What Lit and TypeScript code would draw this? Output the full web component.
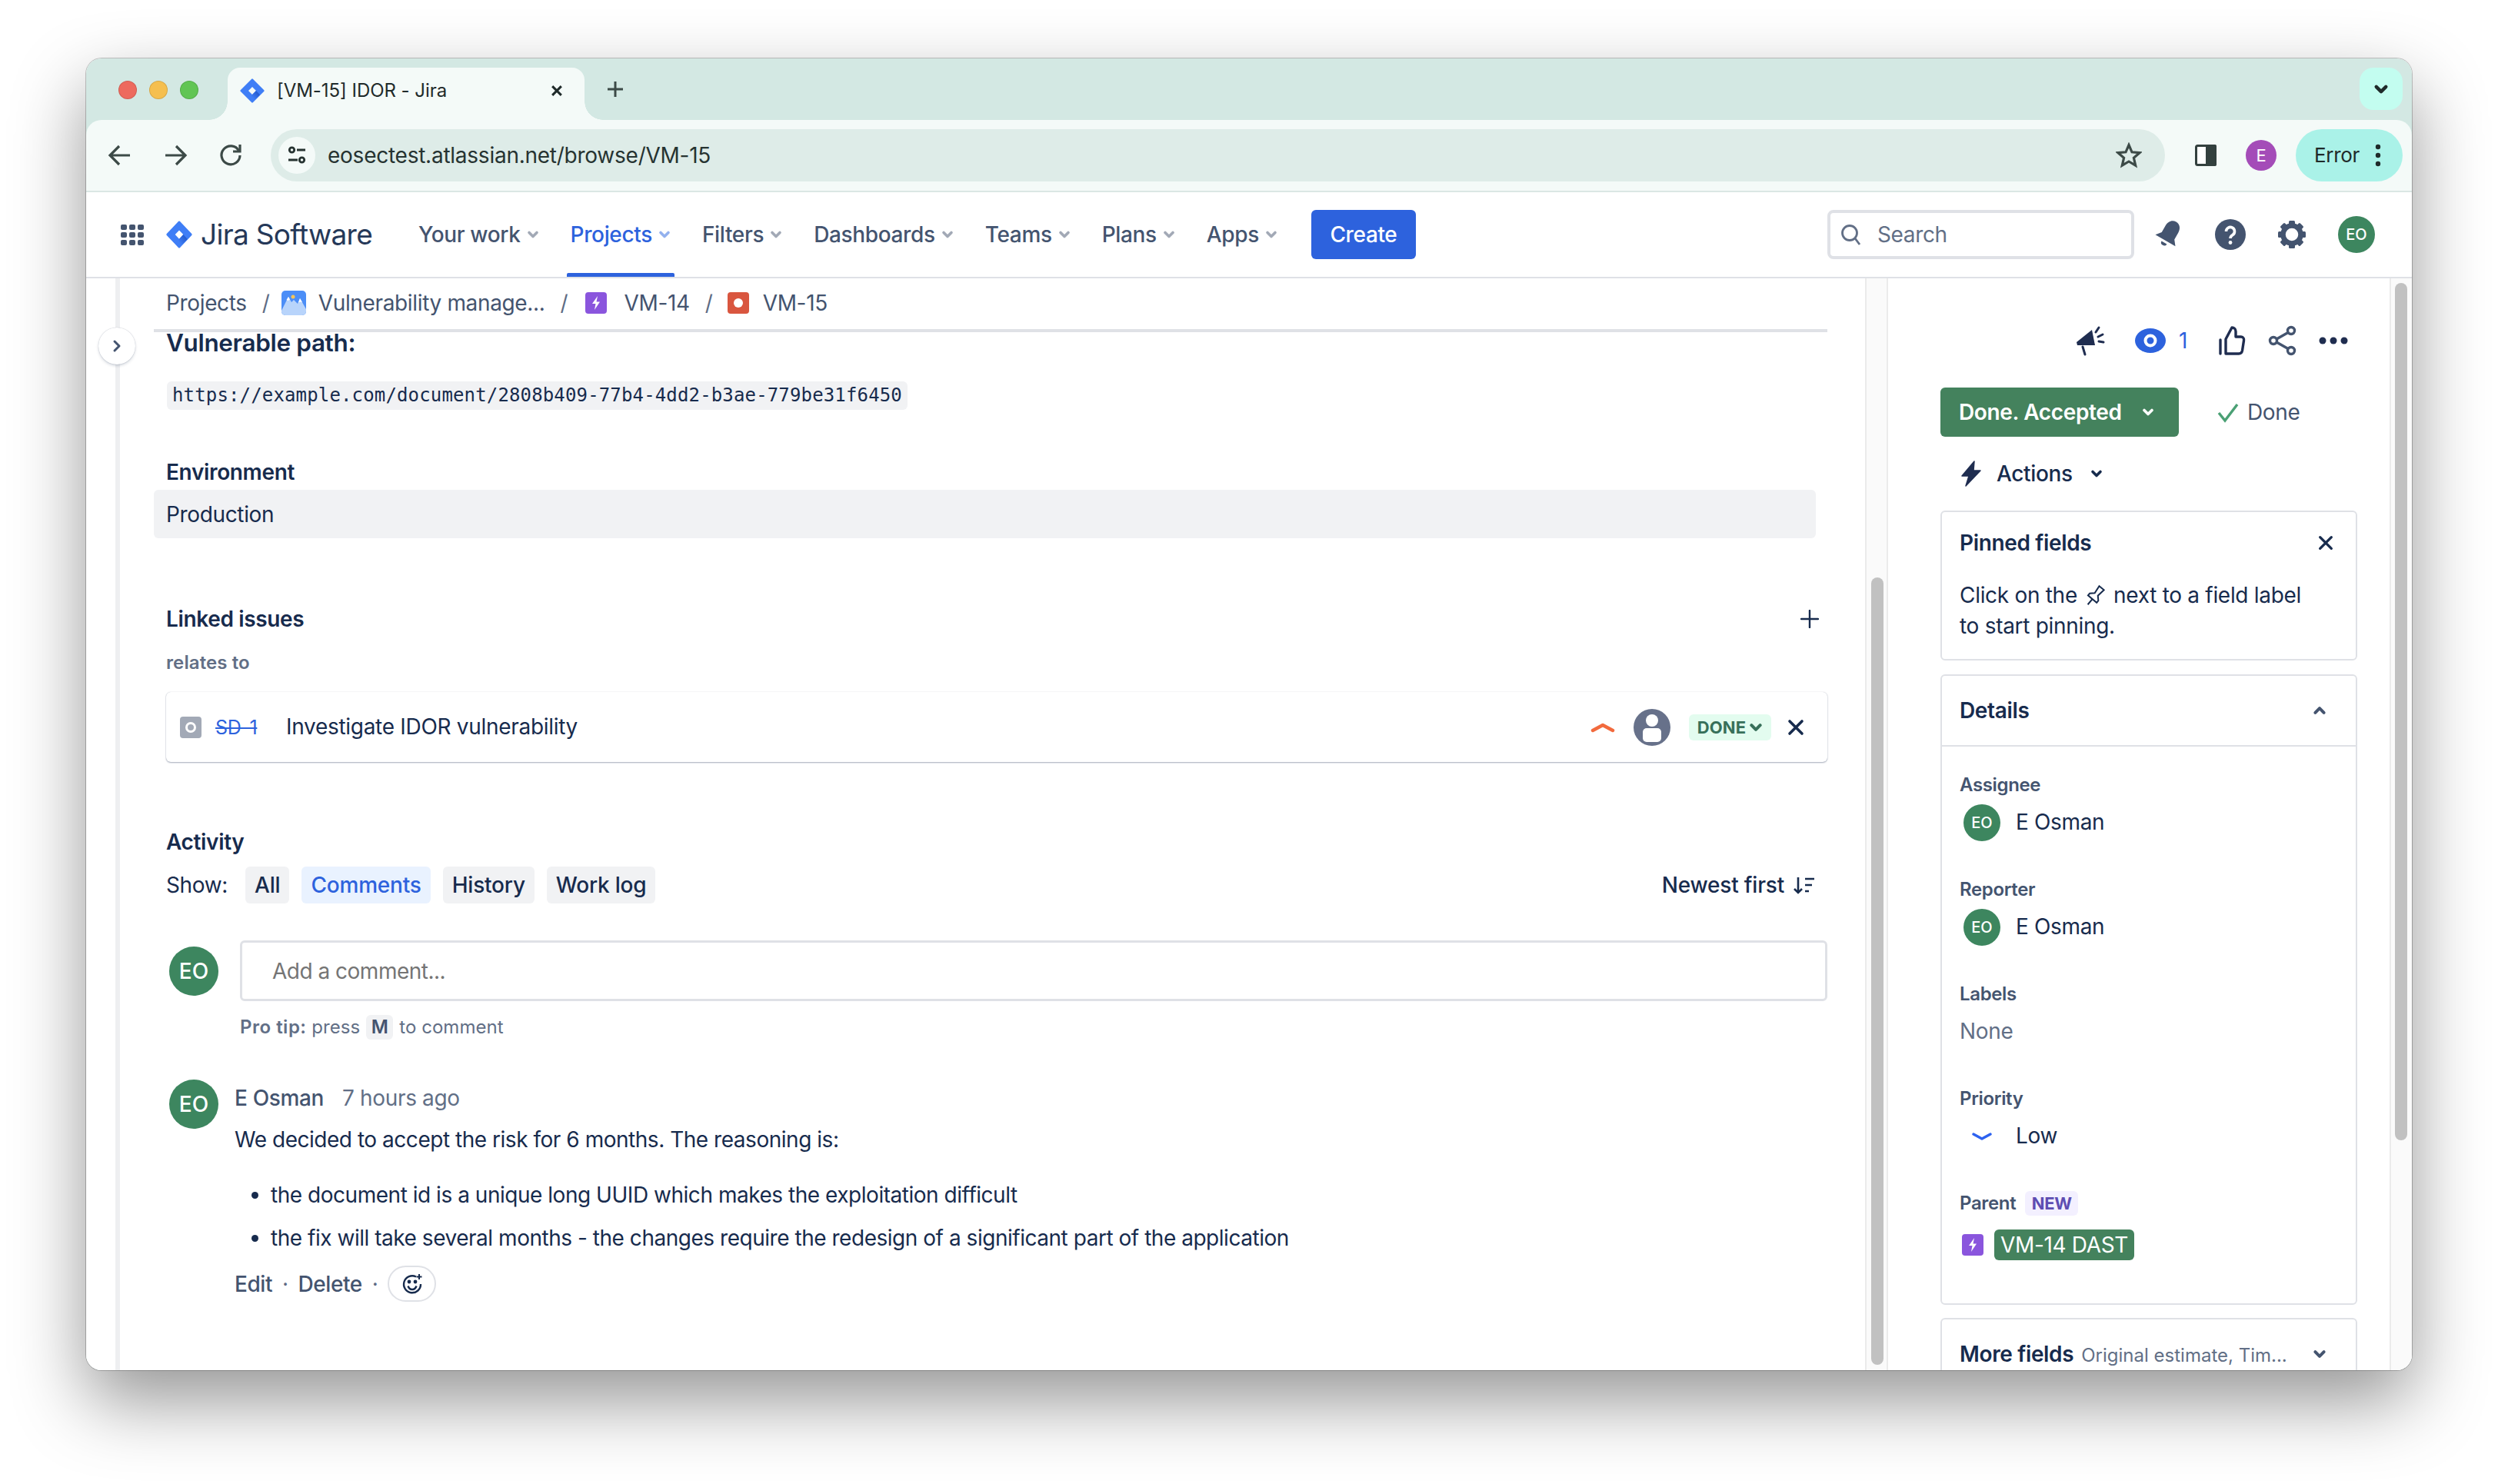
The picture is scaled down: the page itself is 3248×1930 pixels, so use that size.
import { LitElement, css, html, svg } from 'lit';
import { customElement } from 'lit/decorators.js';

const jiraLogo = svg`
  <defs>
    <linearGradient id="jg" x1="0.9" y1="0.1" x2="0.35" y2="0.75">
      <stop offset="0" stop-color="#1f55c8" />
      <stop offset="1" stop-color="#3f7ef6" />
    </linearGradient>
  </defs>
  <path fill="#3f7ef6" fill-rule="evenodd" d="M15.2.7a1.2 1.2 0 0 1 1.6 0l14.5 14.5a1.2 1.2 0 0 1 0 1.6L16.8 31.3a1.2 1.2 0 0 1-1.6 0L.7 16.8a1.2 1.2 0 0 1 0-1.6zM16 11l-5 5 5 5 5-5z" />
  <path fill="url(#jg)" d="M16 21l5-5 5 5.3-10 10a8 8 0 0 1 0-10.300z" />`;

const chevronDown = svg`<path d="M3 5.500l5 5 5-5" fill="none" stroke="currentColor" stroke-width="3.600" stroke-linecap="round" stroke-linejoin="round" />`;
const cross = svg`<path d="M4 4l16 16M20 4L4 20" fill="none" stroke="currentColor" stroke-width="3.600" stroke-linecap="round" />`;
const epicIcon = svg`<rect width="28" height="28" rx="4" fill="#8a55dd" /><path d="M16 5l-7 10h4.500l-1.500 8 7-10.500h-4.500z" fill="#fff" />`;

type Field = { label: string; kind: 'user' | 'none' | 'priority' | 'parent' };

const navItems = ['Your work', 'Projects', 'Filters', 'Dashboards', 'Teams', 'Plans', 'Apps'];
const filters = ['All', 'Comments', 'History', 'Work log'];
const fields: Field[] = [
  { label: 'Assignee', kind: 'user' },
  { label: 'Reporter', kind: 'user' },
  { label: 'Labels', kind: 'none' },
  { label: 'Priority', kind: 'priority' },
  { label: 'Parent', kind: 'parent' },
];

@customElement('app-root')
export class AppRoot extends LitElement {
  static override styles = css`
    :host {
      display: block;
      padding: 76px 112px 148px;
      background: #fff;
      font-family: Inter, 'Liberation Sans', sans-serif;
      font-size: 28px;
      line-height: 40px;
      color: #172b4d;
      letter-spacing: -0.35px;
    }
    * {
      box-sizing: border-box;
    }
    svg {
      display: block;
      flex: none;
    }
    .window {
      width: 3024px;
      height: 1706px;
      border-radius: 20px;
      overflow: hidden;
      background: #d3e8e3;
      display: flex;
      flex-direction: column;
    }
    .frame-shadow {
      border-radius: 20px;
      box-shadow: 0 40px 95px rgba(0, 0, 0, 0.42), 0 0 0 1px rgba(0, 0, 0, 0.22);
    }

    /* browser chrome */
    .tabstrip {
      height: 80px;
      flex: none;
      display: flex;
      padding-left: 42px;
    }
    .lights {
      display: flex;
      gap: 16px;
      margin-top: 29px;
    }
    .light {
      width: 24px;
      height: 24px;
      border-radius: 50%;
      border: 1px solid rgba(0, 0, 0, 0.12);
    }
    .tab {
      position: relative;
      width: 464px;
      height: 68px;
      margin: 12px 0 0 38px;
      background: #f4faf8;
      border-radius: 16px 16px 0 0;
      display: flex;
      align-items: center;
      padding: 0 0 8px 16px;
      font-size: 24px;
      color: #1f2a2a;
    }
    .tab::before,
    .tab::after {
      content: '';
      position: absolute;
      bottom: 0;
      width: 24px;
      height: 24px;
    }
    .tab::before {
      left: -24px;
      background: radial-gradient(circle at 0 0, transparent 23.5px, #f4faf8 24px);
    }
    .tab::after {
      right: -24px;
      background: radial-gradient(circle at 100% 0, transparent 23.5px, #f4faf8 24px);
    }
    .tab-title {
      margin-left: 16px;
      width: 354px;
      letter-spacing: -0.05px;
    }
    .tab-close {
      color: #1f2a2a;
    }
    .new-tab {
      margin: 28px 0 0 28px;
      color: #3c4a47;
    }
    .tab-menu {
      margin: 12px 12px 0 auto;
      width: 56px;
      height: 55px;
      border-radius: 18px;
      background: #c3fdf0;
      display: flex;
      align-items: center;
      justify-content: center;
      color: #1f2a2a;
    }
    .toolbar {
      height: 94px;
      flex: none;
      background: #f4faf8;
      border-radius: 20px 20px 0 0;
      border-bottom: 2px solid #dbe7e4;
      display: flex;
      align-items: center;
      padding-left: 24px;
      gap: 32px;
      color: #3c4a47;
    }
    .tool {
      width: 40px;
      height: 40px;
      flex: none;
    }
    .omnibox {
      width: 2463px;
      height: 68px;
      flex: none;
      border-radius: 34px;
      background: #deece8;
      display: flex;
      align-items: center;
      padding-left: 10px;
      color: #263331;
    }
    .tune {
      width: 48px;
      height: 48px;
      border-radius: 50%;
      background: #f4faf8;
      display: flex;
      align-items: center;
      justify-content: center;
      margin-right: 16px;
    }
    .url {
      letter-spacing: -0.25px;
    }
    .star {
      margin-left: auto;
      margin-right: 30px;
    }
    .panel-toggle {
      margin-left: 1px;
    }
    .profile {
      width: 40px;
      height: 40px;
      border-radius: 50%;
      background: #a44cb8;
      color: #fff;
      font-size: 22px;
      display: flex;
      align-items: center;
      justify-content: center;
    }
    .error-pill {
      margin-left: -7px;
      width: 139px;
      height: 68px;
      border-radius: 34px;
      background: #aaf2e8;
      display: flex;
      align-items: center;
      justify-content: space-between;
      padding: 0 28px 0 24px;
      font-size: 26px;
      letter-spacing: -0.3px;
      color: #1f2a2a;
    }

    /* jira nav */
    .nav {
      height: 112px;
      flex: none;
      background: #fff;
      border-bottom: 2px solid #dfe1e6;
      display: flex;
      align-items: center;
      padding: 0 48px 0 44px;
    }
    .apps-grid {
      margin-right: 28px;
    }
    .wordmark {
      width: 224px;
      margin: 0 59px 0 11px;
      font-size: 37px;
      letter-spacing: -0.7px;
      color: #253858;
      white-space: nowrap;
    }
    .nav-items {
      display: flex;
      gap: 41px;
    }
    .nav-item {
      position: relative;
      height: 110px;
      display: flex;
      align-items: center;
      gap: 8px;
      font-weight: 500;
      color: #44546f;
    }
    .nav-item svg {
      color: #a2a9b6;
    }
    .nav-item.active {
      color: #2d62dd;
    }
    .nav-item.active svg {
      color: #93b1ee;
    }
    .nav-item.active::after {
      content: '';
      position: absolute;
      left: -5px;
      right: -5px;
      bottom: 0;
      height: 5px;
      background: #2d62dd;
      border-radius: 2px 2px 0 0;
    }
    .create {
      margin-left: 44px;
      width: 136px;
      height: 64px;
      border-radius: 6px;
      background: #2d62dd;
      color: #fff;
      font-weight: 500;
      display: flex;
      align-items: center;
      justify-content: center;
    }
    .search {
      margin-left: auto;
      width: 399px;
      height: 64px;
      border: 4px solid #dfe1e6;
      border-radius: 8px;
      display: flex;
      align-items: center;
      padding-left: 12px;
      gap: 21px;
      color: #626f86;
    }
    .bell {
      margin-left: 25px;
    }
    .nav-icon {
      margin-left: 40px;
    }
    .avatar {
      flex: none;
      border-radius: 50%;
      background: #3d865f;
      color: #fff;
      display: flex;
      align-items: center;
      justify-content: center;
      font-weight: 500;
      letter-spacing: 0;
    }
    .avatar.sm {
      width: 48px;
      height: 48px;
      font-size: 20px;
    }
    .avatar.lg {
      width: 64px;
      height: 64px;
      font-size: 28px;
    }

    /* page */
    .main {
      flex: 1;
      min-height: 0;
      display: flex;
      background: #fff;
      position: relative;
    }
    .rail {
      width: 44px;
      flex: none;
      border-right: 6px solid #eeeff1;
    }
    .expand {
      position: absolute;
      left: 16px;
      top: 64px;
      width: 48px;
      height: 48px;
      border-radius: 50%;
      background: #fff;
      box-shadow: 0 0 1px rgba(9, 30, 66, 0.31), 0 2px 4px -1px rgba(9, 30, 66, 0.25);
      display: flex;
      align-items: center;
      justify-content: center;
      color: #44546f;
    }
    .issue {
      width: 2269px;
      flex: none;
      overflow: hidden;
    }
    .crumbs {
      margin-left: 44px;
      width: 2176px;
      height: 70px;
      border-bottom: 4px solid #dfe1e6;
      display: flex;
      align-items: center;
      padding: 0 0 2px 16px;
      color: #44546f;
    }
    .slash {
      margin: 0 17px 0 20px;
      width: 8px;
      color: #5e6c84;
      text-align: center;
    }
    .crumb-icon {
      margin-right: 16px;
    }
    .crumb-icon.issue-type {
      margin: 0 22px 0 8px;
    }
    .crumb-icon.issue-last {
      margin: 0 18px 0 4px;
    }
    .body {
      padding-left: 61px;
      width: 2220px;
    }
    .heading {
      font-weight: 600;
    }
    .body > .heading,
    .linked-head .heading,
    .relates,
    .show-label {
      margin-left: -1px;
    }
    .vuln {
      font-size: 31.5px;
      line-height: 28px;
    }
    .code {
      display: block;
      width: fit-content;
      height: 37px;
      margin-top: 36px;
      padding: 0 7px;
      border-radius: 6px;
      background: #f1f2f4;
      font-family: 'DejaVu Sans Mono', 'Liberation Mono', monospace;
      font-size: 24px;
      line-height: 37px;
      letter-spacing: 0.15px;
    }
    .env-title {
      margin-top: 61px;
    }
    .env-value {
      margin: 3px 0 0 -17px;
      width: 2161px;
      height: 63px;
      padding-left: 16px;
      border-radius: 6px;
      background: #f1f2f4;
      line-height: 65px;
    }
    .linked-head {
      margin-top: 85px;
      width: 2159px;
      padding-right: 11px;
      display: flex;
      align-items: center;
      justify-content: space-between;
    }
    .relates {
      margin-top: 21px;
      font-size: 24px;
      line-height: 32px;
      font-weight: 600;
      letter-spacing: 0.1px;
      color: #626f86;
    }
    .link-card {
      margin: 22px 0 0 -1px;
      width: 2160px;
      height: 91px;
      border-radius: 6px;
      background: #fff;
      box-shadow: 0 1px 2px rgba(9, 30, 66, 0.35), 0 0 1px rgba(9, 30, 66, 0.25);
      display: flex;
      align-items: center;
      padding: 0 29px 0 18px;
    }
    .sd-key {
      width: 92px;
      margin-left: 18px;
      font-size: 25px;
      color: #2d62dd;
      text-decoration: line-through;
    }
    .link-title {
      flex: 1;
      margin-bottom: 2px;
      letter-spacing: -0.3px;
    }
    .link-user {
      width: 48px;
      margin: 0 24px;
    }
    .lozenge {
      width: 107px;
      height: 34px;
      border-radius: 6px;
      background: #e3fcef;
      color: #38705a;
      font-size: 22px;
      font-weight: 700;
      letter-spacing: 0.1px;
      display: flex;
      align-items: center;
      justify-content: center;
      gap: 4px;
    }
    .unlink {
      margin-left: 20px;
    }
    .activity-title {
      margin-top: 84px;
    }
    .show {
      margin-top: 12px;
      width: 2159px;
      height: 48px;
      padding-right: 16px;
      display: flex;
      align-items: center;
      gap: 16px;
    }
    .show-label {
      margin-right: 7px;
    }
    .filter {
      height: 48px;
      padding: 0 12px;
      border-radius: 6px;
      background: #f1f2f4;
      display: flex;
      align-items: center;
      font-weight: 500;
      letter-spacing: -0.2px;
    }
    .filter.active {
      background: #e9f2ff;
      color: #2d62dd;
    }
    .sort {
      margin-left: auto;
      display: flex;
      align-items: center;
      gap: 10px;
      font-weight: 500;
      letter-spacing: -0.2px;
    }
    .composer {
      margin-top: 48px;
      padding-left: 3px;
      width: 2159px;
      display: flex;
      align-items: center;
      gap: 28px;
    }
    .comment-input {
      flex: 1;
      height: 79px;
      border: 3px solid #dfe1e6;
      border-radius: 6px;
      display: flex;
      align-items: center;
      padding-left: 39px;
      color: #757575;
      letter-spacing: -0.5px;
    }
    .tip {
      margin: 18px 0 0 95px;
      height: 32px;
      display: flex;
      align-items: center;
      font-size: 24px;
      color: #626f86;
      letter-spacing: 0.05px;
      gap: 8px;
    }
    .tip b {
      font-weight: 600;
      letter-spacing: 0.5px;
    }
    .kbd {
      width: 35px;
      height: 32px;
      border-radius: 6px;
      background: #f1f2f4;
      font-weight: 600;
      text-align: center;
      line-height: 32px;
      color: #44546f;
    }
    .comment {
      margin-top: 52px;
      padding-left: 3px;
      display: flex;
      gap: 21px;
    }
    .comment-main {
      padding-top: 4px;
    }
    .comment-head {
      display: flex;
      gap: 24px;
    }
    .author {
      font-weight: 500;
      color: #44546f;
    }
    .when {
      color: #626f86;
    }
    .comment-text {
      margin-top: 14px;
      letter-spacing: -0.47px;
    }
    .comment ul {
      margin: 32px 0 0;
      padding-left: 47px;
      letter-spacing: -0.47px;
    }
    .comment li + li {
      margin-top: 16px;
    }
    .comment-actions {
      margin-top: 16px;
      height: 47px;
      display: flex;
      align-items: center;
      gap: 13px;
      color: #44546f;
      font-weight: 500;
      letter-spacing: -0.45px;
    }
    .dot {
      color: #5e6c84;
      font-weight: 400;
    }
    .react {
      width: 63px;
      height: 47px;
      border: 2px solid #dfe1e6;
      border-radius: 24px;
      display: flex;
      align-items: center;
      justify-content: center;
    }

    /* scrollbars */
    .track {
      flex: none;
      background: #fafafa;
      border-left: 2px solid #ebebeb;
      border-right: 2px solid #ebebeb;
    }
    .track.mid {
      width: 30px;
      padding: 389px 0 0 6px;
    }
    .track.end {
      width: 29px;
      border-right: 0;
      padding: 6px 0 0 5px;
    }
    .thumb {
      width: 16px;
      border-radius: 8px;
      background: #c1c1c1;
    }
    .mid .thumb {
      height: 1024px;
    }
    .end .thumb {
      height: 1115px;
    }

    /* right panel */
    .side {
      width: 652px;
      flex: none;
      padding-left: 68px;
      overflow: hidden;
    }
    .side-inner {
      width: 542px;
    }
    .side-tools {
      margin-top: 57px;
      height: 48px;
      padding-right: 11px;
      display: flex;
      align-items: center;
      justify-content: flex-end;
      gap: 26px;
    }
    .watch {
      display: flex;
      align-items: center;
      gap: 17px;
      margin-left: 12px;
      margin-right: 11px;
      color: #2d62dd;
    }
    .watch-count {
      width: 12px;
    }
    .status-row {
      margin-top: 37px;
      display: flex;
      align-items: center;
    }
    .status {
      width: 310px;
      height: 64px;
      border-radius: 6px;
      background: #44825d;
      color: #fff;
      font-weight: 600;
      display: flex;
      align-items: center;
      padding-left: 24px;
    }
    .status svg {
      margin-left: auto;
      margin-right: 32px;
    }
    .resolution {
      margin-left: 50px;
      display: flex;
      align-items: center;
      gap: 11px;
      color: #44546f;
    }
    .actions {
      margin-top: 24px;
      height: 48px;
      padding-left: 26px;
      display: flex;
      align-items: center;
      font-weight: 500;
      gap: 19px;
    }
    .actions svg:last-child {
      margin-left: 4px;
    }
    .panel {
      border: 2px solid #dfe1e6;
      border-radius: 6px;
      background: #fff;
    }
    .pinned {
      margin-top: 24px;
      padding: 20px 25px 23px 23px;
    }
    .pinned-head {
      display: flex;
      align-items: center;
      justify-content: space-between;
      padding-right: 3px;
    }
    .pinned-text {
      margin-top: 28px;
      letter-spacing: -0.3px;
    }
    .pin {
      display: inline-block;
      vertical-align: -7px;
      margin: 0;
    }
    .panel-head {
      height: 90px;
      padding: 0 38px 0 23px;
      display: flex;
      align-items: center;
      justify-content: space-between;
    }
    .details {
      margin-top: 18px;
    }
    .details .panel-head {
      border-bottom: 2px solid #dfe1e6;
      height: 92px;
    }
    .fields {
      padding: 34px 25px 52px 23px;
      display: flex;
      flex-direction: column;
      gap: 47px;
    }
    .field-label {
      height: 32px;
      font-size: 24px;
      line-height: 32px;
      font-weight: 600;
      color: #44546f;
      display: flex;
      gap: 12px;
    }
    .new {
      width: 69px;
      height: 32px;
      border-radius: 6px;
      background: #f3f0ff;
      color: #5e4db2;
      font-size: 22px;
      font-weight: 700;
      text-align: center;
    }
    .field-value {
      margin-top: 9px;
      height: 48px;
      display: flex;
      align-items: center;
      gap: 20px;
      padding-left: 5px;
    }
    .field-value.muted {
      color: #626f86;
      padding-left: 0;
    }
    .val-text {
      margin-bottom: 2px;
    }
    .low {
      width: 48px;
      display: flex;
      justify-content: center;
    }
    .field-value.parent {
      margin-top: 14px;
      padding-left: 3px;
      gap: 14px;
    }
    .parent-tag {
      height: 40px;
      width: 182px;
      border-radius: 6px;
      background: #44825d;
      color: #fff;
      text-align: center;
      line-height: 40px;
    }
    .more {
      margin-top: 17px;
    }
    .more-title {
      font-weight: 600;
      padding-top: 2px;
    }
    .more-sub {
      font-size: 24px;
      color: #626f86;
      margin-left: 10px;
      font-weight: 400;
      letter-spacing: 0;
    }
  `;

  private renderChrome() {
    return html`
      <div class="tabstrip">
        <div class="lights">
          <div class="light" style="background:#ed6a5e"></div>
          <div class="light" style="background:#f5bf4f"></div>
          <div class="light" style="background:#61c554"></div>
        </div>
        <div class="tab">
          <svg width="32" height="32" viewBox="0 0 32 32">${jiraLogo}</svg>
          <span class="tab-title">[VM-15] IDOR - Jira</span>
          <svg class="tab-close" width="20" height="20" viewBox="0 0 24 24">
            <path d="M5 5l14 14M19 5L5 19" fill="none" stroke="currentColor" stroke-width="3.600" />
          </svg>
        </div>
        <svg class="new-tab" width="24" height="24" viewBox="0 0 24 24">
          <path d="M12 2v20M2 12h20" fill="none" stroke="currentColor" stroke-width="3" />
        </svg>
        <div class="tab-menu">
          <svg width="20" height="20" viewBox="0 0 16 16">${chevronDown}</svg>
        </div>
      </div>
      <div class="toolbar">
        <svg class="tool" viewBox="0 0 40 40" fill="none" stroke="currentColor" stroke-width="3.200">
          <path d="M33 20H8M19 8L7 20l12 12" />
        </svg>
        <svg class="tool" viewBox="0 0 40 40" fill="none" stroke="currentColor" stroke-width="3.200">
          <path d="M7 20h25M21 8l12 12-12 12" />
        </svg>
        <svg class="tool" viewBox="0 0 40 40" fill="none" stroke="currentColor" stroke-width="3.200">
          <path d="M30.500 14A12 12 0 1 0 32 20" />
          <path d="M32 6v9h-9" />
        </svg>
        <div class="omnibox">
          <div class="tune">
            <svg width="28" height="28" viewBox="0 0 28 28" fill="none" stroke="#263331" stroke-width="2.800">
              <circle cx="7.500" cy="7" r="3.200" />
              <path d="M14 7h11M3 20h12" />
              <circle cx="20.500" cy="20" r="3.200" />
            </svg>
          </div>
          <span class="url">eosectest.atlassian.net/browse/VM-15</span>
          <svg class="star" width="34" height="34" viewBox="0 0 34 34" fill="none" stroke="#3c4a47" stroke-width="3.200">
            <path d="M17 3.500l4 9.300 10 .9-7.600 6.600 2.300 9.900L17 25l-8.700 5.200 2.300-9.900L3 13.700l10-.9z" />
          </svg>
        </div>
        <svg class="tool panel-toggle" viewBox="0 0 40 40">
          <rect x="7.500" y="7.500" width="25" height="25" rx="2" fill="#fff" stroke="#33403e" stroke-width="3" />
          <rect x="20" y="6" width="14" height="28" rx="2" fill="#33403e" />
        </svg>
        <div class="profile">E</div>
        <div class="error-pill">
          <span>Error</span>
          <svg width="8" height="32" viewBox="0 0 8 32" fill="#1f2a2a">
            <circle cx="4" cy="5" r="3.200" /><circle cx="4" cy="16" r="3.200" /><circle cx="4" cy="27" r="3.200" />
          </svg>
        </div>
      </div>
    `;
  }

  private renderNav() {
    return html`
      <div class="nav">
        <svg class="apps-grid" width="32" height="32" viewBox="0 0 32 32" fill="#44546f">
          ${[3, 13, 23].map((y) =>
            [1, 12, 23].map((x) => svg`<rect x=${x} y=${y} width="8" height="7" rx="2" />`)
          )}
        </svg>
        <svg width="34" height="36" viewBox="0 0 32 32" preserveAspectRatio="none">${jiraLogo}</svg>
        <div class="wordmark">Jira Software</div>
        <div class="nav-items">
          ${navItems.map(
            (item) => html`
              <div class="nav-item ${item === 'Projects' ? 'active' : ''}">
                ${item}
                <svg width="16" height="16" viewBox="0 0 16 16">${chevronDown}</svg>
              </div>
            `
          )}
        </div>
        <div class="create">Create</div>
        <div class="search">
          <svg width="28" height="32" viewBox="0 0 28 32" fill="none" stroke="#626f86" stroke-width="2.800">
            <circle cx="13" cy="14" r="9.500" />
            <path d="M20 21l6 8" />
          </svg>
          Search
        </div>
        <svg class="bell" width="40" height="40" viewBox="0 0 40 40" fill="#44546f">
          <g transform="rotate(30 20 20)">
            <path d="M20 1c-6 0-9.500 5-9.500 11v10L5 29h30l-5.500-7V12C29.500 6 26 1 20 1z" />
            <path d="M16 32a4 4 0 0 0 8 0z" />
          </g>
        </svg>
        <svg class="nav-icon" width="40" height="40" viewBox="0 0 40 40">
          <circle cx="20" cy="20" r="20" fill="#44546f" />
          <path d="M14.500 16a5.500 5.500 0 1 1 8.500 4.600c-2 1.300-3 2.400-3 4.400" fill="none" stroke="#fff" stroke-width="3.600" />
          <circle cx="20" cy="30.500" r="2.400" fill="#fff" />
        </svg>
        <svg class="nav-icon" width="40" height="40" viewBox="0 0 40 40" fill="#44546f">
          ${[0, 45, 90, 135, 180, 225, 270, 315].map(
            (a) => svg`<rect x="16" y="2" width="8" height="7" rx="1.500" transform="rotate(${a} 20 20)" />`
          )}
          <circle cx="20" cy="20" r="11.500" fill="none" stroke="#44546f" stroke-width="6.500" />
        </svg>
        <div class="avatar sm nav-icon">EO</div>
      </div>
    `;
  }

  private renderIssue() {
    return html`
      <div class="issue">
        <div class="crumbs">
          <span>Projects</span>
          <span class="slash">/</span>
          <svg class="crumb-icon" width="32" height="32" viewBox="0 0 32 32">
            <rect width="32" height="32" rx="5" fill="#4c8ef7" />
            <path d="M0 26l9-18 4 7 3-3 5 5 3-7 8 14v3a5 5 0 0 1-5 5H5a5 5 0 0 1-5-5z" fill="#b8d4fb" />
            <path d="M9 8l2 3.500-2.500 1.500L6.500 12zM24 10l3 5-3-.5-2 1z" fill="#fff" />
            <circle cx="15" cy="8" r="2.500" fill="#f5c55a" />
          </svg>
          <span>Vulnerability manage...</span>
          <span class="slash">/</span>
          <svg class="crumb-icon issue-type" width="28" height="28" viewBox="0 0 28 28">${epicIcon}</svg>
          <span>VM-14</span>
          <span class="slash">/</span>
          <svg class="crumb-icon issue-last" width="28" height="28" viewBox="0 0 28 28">
            <rect width="28" height="28" rx="4" fill="#d9563f" />
            <circle cx="14" cy="14" r="6" fill="#fff" />
          </svg>
          <span>VM-15</span>
        </div>
        <div class="body">
          <div class="heading vuln">Vulnerable path:</div>
          <code class="code">https://example.com/document/2808b409-77b4-4dd2-b3ae-779be31f6450</code>
          <div class="heading env-title">Environment</div>
          <div class="env-value">Production</div>
          <div class="linked-head">
            <span class="heading">Linked issues</span>
            <svg width="24" height="24" viewBox="0 0 24 24">
              <path d="M12 1v22M1 12h22" fill="none" stroke="#172b4d" stroke-width="2.400" stroke-linecap="round" />
            </svg>
          </div>
          <div class="relates">relates to</div>
          <div class="link-card">
            <svg width="28" height="28" viewBox="0 0 28 28">
              <rect width="28" height="28" rx="4" fill="#a2a9b6" />
              <circle cx="14" cy="14" r="5.500" fill="none" stroke="#fff" stroke-width="3" />
            </svg>
            <span class="sd-key">SD-1</span>
            <span class="link-title">Investigate IDOR vulnerability</span>
            <svg width="32" height="16" viewBox="0 0 32 16">
              <path d="M3 12l13-7 13 7" fill="none" stroke="#f26a3d" stroke-width="4.500" stroke-linecap="round" stroke-linejoin="round" />
            </svg>
            <svg class="link-user" width="48" height="48" viewBox="0 0 48 48">
              <circle cx="24" cy="24" r="24" fill="#67718a" />
              <circle cx="24" cy="15" r="8" fill="#fff" />
              <rect x="12" y="25" width="24" height="18" rx="5" fill="#fff" />
            </svg>
            <div class="lozenge">
              DONE
              <svg width="18" height="18" viewBox="0 0 16 16">${chevronDown}</svg>
            </div>
            <svg class="unlink" width="24" height="24" viewBox="0 0 24 24">${cross}</svg>
          </div>
          <div class="heading activity-title">Activity</div>
          <div class="show">
            <span class="show-label">Show:</span>
            ${filters.map(
              (f) => html`<div class="filter ${f === 'Comments' ? 'active' : ''}">${f}</div>`
            )}
            <div class="sort">
              Newest first
              <svg width="30" height="28" viewBox="0 0 30 28" fill="none" stroke="#172b4d" stroke-width="2.600">
                <path d="M8 4v20M3 19l5 5 5-5" />
                <path d="M17 6h12M17 14h9M17 22h5" />
              </svg>
            </div>
          </div>
          <div class="composer">
            <div class="avatar lg">EO</div>
            <div class="comment-input">Add a comment...</div>
          </div>
          <div class="tip">
            <span><b>Pro tip:</b> press</span>
            <span class="kbd">M</span>
            <span>to comment</span>
          </div>
          <div class="comment">
            <div class="avatar lg">EO</div>
            <div class="comment-main">
              <div class="comment-head">
                <span class="author">E Osman</span>
                <span class="when">7 hours ago</span>
              </div>
              <div class="comment-text">We decided to accept the risk for 6 months. The reasoning is:</div>
              <ul>
                <li>the document id is a unique long UUID which makes the exploitation difficult</li>
                <li>the fix will take several months - the changes require the redesign of a significant part of the application</li>
              </ul>
              <div class="comment-actions">
                <span>Edit</span>
                <span class="dot">·</span>
                <span>Delete</span>
                <span class="dot">·</span>
                <div class="react">
                  <svg width="28" height="28" viewBox="0 0 28 28" fill="none" stroke="#172b4d" stroke-width="2.400">
                    <path d="M19 4.500A11 11 0 1 0 25 14" />
                    <path d="M8.500 16.500c1 3 3 4.500 5.500 4.500s4.500-1.500 5.500-4.500" />
                    <path d="M23 1v7M19.500 4.500h7" stroke-width="2" />
                    <circle cx="10" cy="11" r="1.200" fill="#172b4d" />
                    <circle cx="18" cy="11" r="1.200" fill="#172b4d" />
                  </svg>
                </div>
              </div>
            </div>
          </div>
        </div>
      </div>
    `;
  }

  private renderFieldValue(field: Field) {
    switch (field.kind) {
      case 'user':
        return html`<div class="field-value">
          <div class="avatar sm">EO</div>
          <span class="val-text">E Osman</span>
        </div>`;
      case 'none':
        return html`<div class="field-value muted"><span class="val-text">None</span></div>`;
      case 'priority':
        return html`<div class="field-value">
          <div class="low">
            <svg width="26" height="12" viewBox="0 0 26 12">
              <path d="M2 3l11 6 11-6" fill="none" stroke="#2d62f0" stroke-width="3.400" stroke-linecap="round" stroke-linejoin="round" />
            </svg>
          </div>
          <span class="val-text">Low</span>
        </div>`;
      default:
        return html`<div class="field-value parent">
          <svg width="28" height="28" viewBox="0 0 28 28">${epicIcon}</svg>
          <div class="parent-tag">VM-14 DAST</div>
        </div>`;
    }
  }

  private renderSide() {
    return html`
      <div class="side">
        <div class="side-inner">
          <div class="side-tools">
            <svg width="40" height="40" viewBox="0 0 40 40">
              <path d="M2 22L22 6l4 20H3z" fill="#1f2d50" />
              <path d="M10 28l3 10M27 9l4-6M30 15l6-3M31 21l6 1" fill="none" stroke="#1f2d50" stroke-width="3" stroke-linecap="round" />
            </svg>
            <div class="watch">
              <svg width="40" height="32" viewBox="0 0 40 32">
                <ellipse cx="20" cy="16" rx="20" ry="16" fill="#2d62dd" />
                <circle cx="20" cy="16" r="6.500" fill="none" stroke="#fff" stroke-width="4" />
              </svg>
              <span class="watch-count">1</span>
            </div>
            <svg width="40" height="40" viewBox="0 0 40 40" fill="none" stroke="#1f2d50" stroke-width="3.400" stroke-linejoin="round" stroke-linecap="round">
              <path d="M12 18L20 3c3 0 5 2 5 5v7h7c3 0 4 3 3.500 5l-2 13c-.4 2-2 4-4.500 4H12z" />
              <path d="M5 19v18" />
            </svg>
            <svg width="40" height="40" viewBox="0 0 40 40" fill="none" stroke="#44546f" stroke-width="3.400">
              <circle cx="31" cy="7" r="4.500" />
              <circle cx="8" cy="20" r="4.500" />
              <circle cx="31" cy="33" r="4.500" />
              <path d="M27 9.500L12 18M12 22l15 8.500" />
            </svg>
            <svg width="40" height="12" viewBox="0 0 40 12" fill="#1f2d50">
              <circle cx="6" cy="6" r="4.500" /><circle cx="20" cy="6" r="4.500" /><circle cx="34" cy="6" r="4.500" />
            </svg>
          </div>
          <div class="status-row">
            <div class="status">
              Done. Accepted
              <svg width="16" height="16" viewBox="0 0 16 16">${chevronDown}</svg>
            </div>
            <div class="resolution">
              <svg width="28" height="28" viewBox="0 0 28 28">
                <path d="M2 15l8 10L26 4" fill="none" stroke="#4aa074" stroke-width="3.400" />
              </svg>
              Done
            </div>
          </div>
          <div class="actions">
            <svg width="28" height="34" viewBox="0 0 28 34" fill="#1f2d50" stroke="#1f2d50" stroke-width="1.500" stroke-linejoin="round">
              <path d="M18 1L2 20h9L7 33l19-20h-9z" />
            </svg>
            Actions
            <svg width="16" height="16" viewBox="0 0 16 16">${chevronDown}</svg>
          </div>
          <div class="panel pinned">
            <div class="pinned-head">
              <span class="heading">Pinned fields</span>
              <svg width="22" height="22" viewBox="0 0 24 24">${cross}</svg>
            </div>
            <div class="pinned-text">
              <span>Click on the</span>
              <svg class="pin" width="32" height="32" viewBox="0 0 24 24" fill="none" stroke="#172b4d" stroke-width="1.500">
                <g transform="rotate(40 12 12)">
                  <path d="M9 2h6l-1 8 3.500 3.500V16h-11v-2.500L10 10zM12 16v7" />
                </g>
              </svg>
              <span>next to a field label</span><br />
              <span>to start pinning.</span>
            </div>
          </div>
          <div class="panel details">
            <div class="panel-head">
              <span class="heading">Details</span>
              <svg width="18" height="18" viewBox="0 0 16 16" style="color:#44546f;transform:rotate(180deg)">${chevronDown}</svg>
            </div>
            <div class="fields">
              ${fields.map(
                (field) => html`
                  <div>
                    <div class="field-label">
                      ${field.label}
                      ${field.kind === 'parent' ? html`<span class="new">NEW</span>` : ''}
                    </div>
                    ${this.renderFieldValue(field)}
                  </div>
                `
              )}
            </div>
          </div>
          <div class="panel more">
            <div class="panel-head">
              <span class="more-title">More fields<span class="more-sub">Original estimate, Tim...</span></span>
              <svg width="18" height="18" viewBox="0 0 16 16" style="color:#44546f">${chevronDown}</svg>
            </div>
          </div>
        </div>
      </div>
    `;
  }

  override render() {
    return html`
      <div class="frame-shadow">
        <div class="window">
          ${this.renderChrome()} ${this.renderNav()}
          <div class="main">
            <div class="rail"></div>
            <div class="expand">
              <svg width="16" height="20" viewBox="0 0 16 20">
                <path d="M5 4l6 6-6 6" fill="none" stroke="currentColor" stroke-width="3" stroke-linecap="round" stroke-linejoin="round" />
              </svg>
            </div>
            ${this.renderIssue()}
            <div class="track mid"><div class="thumb"></div></div>
            ${this.renderSide()}
            <div class="track end"><div class="thumb"></div></div>
          </div>
        </div>
      </div>
    `;
  }
}
